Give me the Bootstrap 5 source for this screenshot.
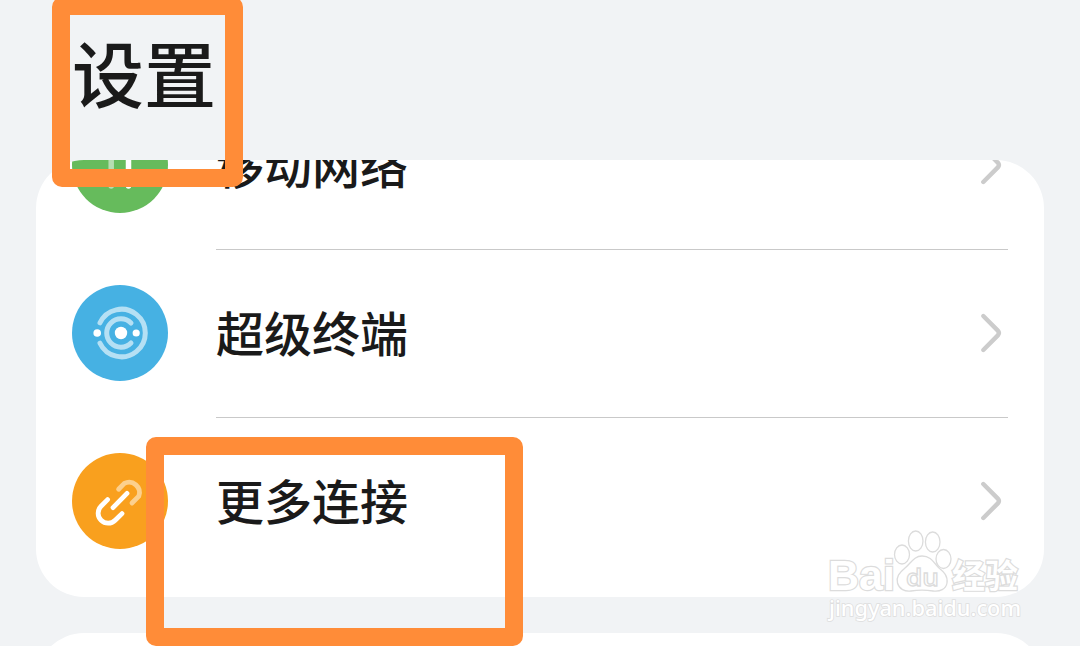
<!DOCTYPE html>
<html lang="zh-CN">
<head>
<meta charset="utf-8">
<meta name="viewport" content="width=device-width, initial-scale=1">
<title>设置</title>
<link href="https://cdn.jsdelivr.net/npm/bootstrap@5.3.0/dist/css/bootstrap.min.css" rel="stylesheet">
<style>
body{background:#f1f3f5;color:#1a1a1a;font-family:"Noto Sans CJK SC",sans-serif;font-weight:500}
.screen{width:1080px;height:646px}
.top-bar{height:160px;padding:0 72px}
.page-title{font-size:72px;line-height:72px;font-weight:500;padding-top:35px}
.panel{margin:0 36px;border-radius:48px;background:#fff}
.panel-first{height:437px}
.scrolled{margin-top:-79px}
.item{height:168px;padding-left:36px}
.item-icon{width:96px;height:96px;margin-right:48px}
.item-body{height:168px;margin-right:36px;box-shadow:0 1px 0 #c9c9c9}
.item:last-child .item-body{box-shadow:none}
.item-label{font-size:48px;line-height:72px;padding-bottom:4px}
.chevron{width:24px;height:48px;margin-right:4px}
.panel-next{margin-top:36px;height:200px}
.frame{border:18px solid #ff8c38;border-radius:10px}
.frame-title{left:52px;top:-3px;width:191px;height:190px}
.frame-link{left:146px;top:437px;width:377px;height:209px}
.watermark{left:820px;top:524px}
</style>
</head>
<body>
<div class="screen position-relative overflow-hidden">
  <header class="top-bar"><h1 class="page-title m-0">设置</h1></header>
  <main>
    <section class="panel panel-first overflow-hidden d-flex flex-column">
      <div class="scrolled">
        <div class="item d-flex align-items-center">
          <svg class="item-icon flex-shrink-0" viewBox="0 0 96 96"><circle cx="48" cy="48" r="48" fill="#66bb5c"/><path d="M39.2 27V69" stroke="#b6deb1" stroke-width="5.5" stroke-linecap="round"/><path d="M56.5 27V69" stroke="#fff" stroke-width="5.5" stroke-linecap="round"/></svg>
          <div class="item-body flex-grow-1 d-flex align-items-center justify-content-between"><span class="item-label">移动网络</span>
            <svg class="chevron" viewBox="0 0 24 48" fill="none" stroke="#ccc" stroke-width="4.4" stroke-linecap="round"><path d="M3.3 7L17.8 21.6Q20 24 17.8 26.4L3.3 41"/></svg></div>
        </div>
        <div class="item d-flex align-items-center">
          <svg class="item-icon flex-shrink-0" viewBox="0 0 96 96"><circle cx="48" cy="48" r="48" fill="#46b1e3"/><g fill="none" stroke="#b5e0f4" stroke-width="5" stroke-linecap="round"><path d="M28 37.8A23.8 23.8 0 1 1 28 58.2"/><path d="M59 38A14.2 14.2 0 1 0 59 58"/></g><g fill="#fff"><circle cx="49" cy="48" r="6.2"/><circle cx="25.2" cy="48" r="3.8"/><circle cx="64.2" cy="48" r="3.6"/></g></svg>
          <div class="item-body flex-grow-1 d-flex align-items-center justify-content-between"><span class="item-label">超级终端</span>
            <svg class="chevron" viewBox="0 0 24 48" fill="none" stroke="#ccc" stroke-width="4.4" stroke-linecap="round"><path d="M3.3 7L17.8 21.6Q20 24 17.8 26.4L3.3 41"/></svg></div>
        </div>
        <div class="item d-flex align-items-center">
          <svg class="item-icon flex-shrink-0" viewBox="0 0 96 96"><circle cx="48" cy="48" r="48" fill="#f9a01e"/><g fill="none" stroke-width="4.8" stroke-linecap="round"><path d="M46.6 36.2L52.3 30.4A10.4 10.4 0 0 1 66.8 43.2L60 50" stroke="#fcd08e"/><path d="M41 54.6L55 40.4M35.6 46.6L29 53.2A9.6 9.6 0 0 0 43.2 67.2L50 60.6" stroke="#fff"/></g></svg>
          <div class="item-body flex-grow-1 d-flex align-items-center justify-content-between"><span class="item-label">更多连接</span>
            <svg class="chevron" viewBox="0 0 24 48" fill="none" stroke="#ccc" stroke-width="4.4" stroke-linecap="round"><path d="M3.3 7L17.8 21.6Q20 24 17.8 26.4L3.3 41"/></svg></div>
        </div>
      </div>
    </section>
    <section class="panel panel-next"></section>
  </main>
  <div class="frame frame-title position-absolute"></div>
  <div class="frame frame-link position-absolute"></div>
  <svg class="watermark position-absolute" width="210" height="106" viewBox="0 0 210 106" fill="#fff" stroke="#dcdcdc" stroke-width="1.3">
    <text x="8" y="66" font-family="Liberation Sans, sans-serif" font-weight="700" font-size="43" textLength="67" lengthAdjust="spacingAndGlyphs" paint-order="stroke" stroke-width="2.4">Bai</text>
    <ellipse cx="82" cy="30.5" rx="7.5" ry="9.5"/><ellipse cx="95.7" cy="17" rx="7.3" ry="10"/><ellipse cx="112.7" cy="18" rx="7.3" ry="10"/><ellipse cx="123.5" cy="35" rx="7.5" ry="9.5"/>
    <path d="M102 32C94 32 91 39 85 44C79 49 76 53 77.5 59C79 65 85 68 91 67C98 66 106 66 113 67C120 68 126 65 127 59C128 52 124 48 119 44C114 39 111 32 102 32Z"/>
    <text x="86" y="61.5" font-family="Open Sans, sans-serif" font-size="24" font-weight="600" textLength="33" lengthAdjust="spacingAndGlyphs">du</text>
    <text x="132" y="64" font-family="Noto Sans CJK SC, sans-serif" font-size="33" font-weight="700" paint-order="stroke" stroke-width="2.4">经验</text>
    <text x="9" y="91.5" font-family="Noto Sans, sans-serif" font-size="22" font-weight="500" textLength="192" lengthAdjust="spacingAndGlyphs" paint-order="stroke" stroke="#dedede" stroke-width="1.6">jingyan.baidu.com</text>
  </svg>
</div>
<script src="https://cdn.jsdelivr.net/npm/bootstrap@5.3.0/dist/js/bootstrap.bundle.min.js"></script>
</body>
</html>
